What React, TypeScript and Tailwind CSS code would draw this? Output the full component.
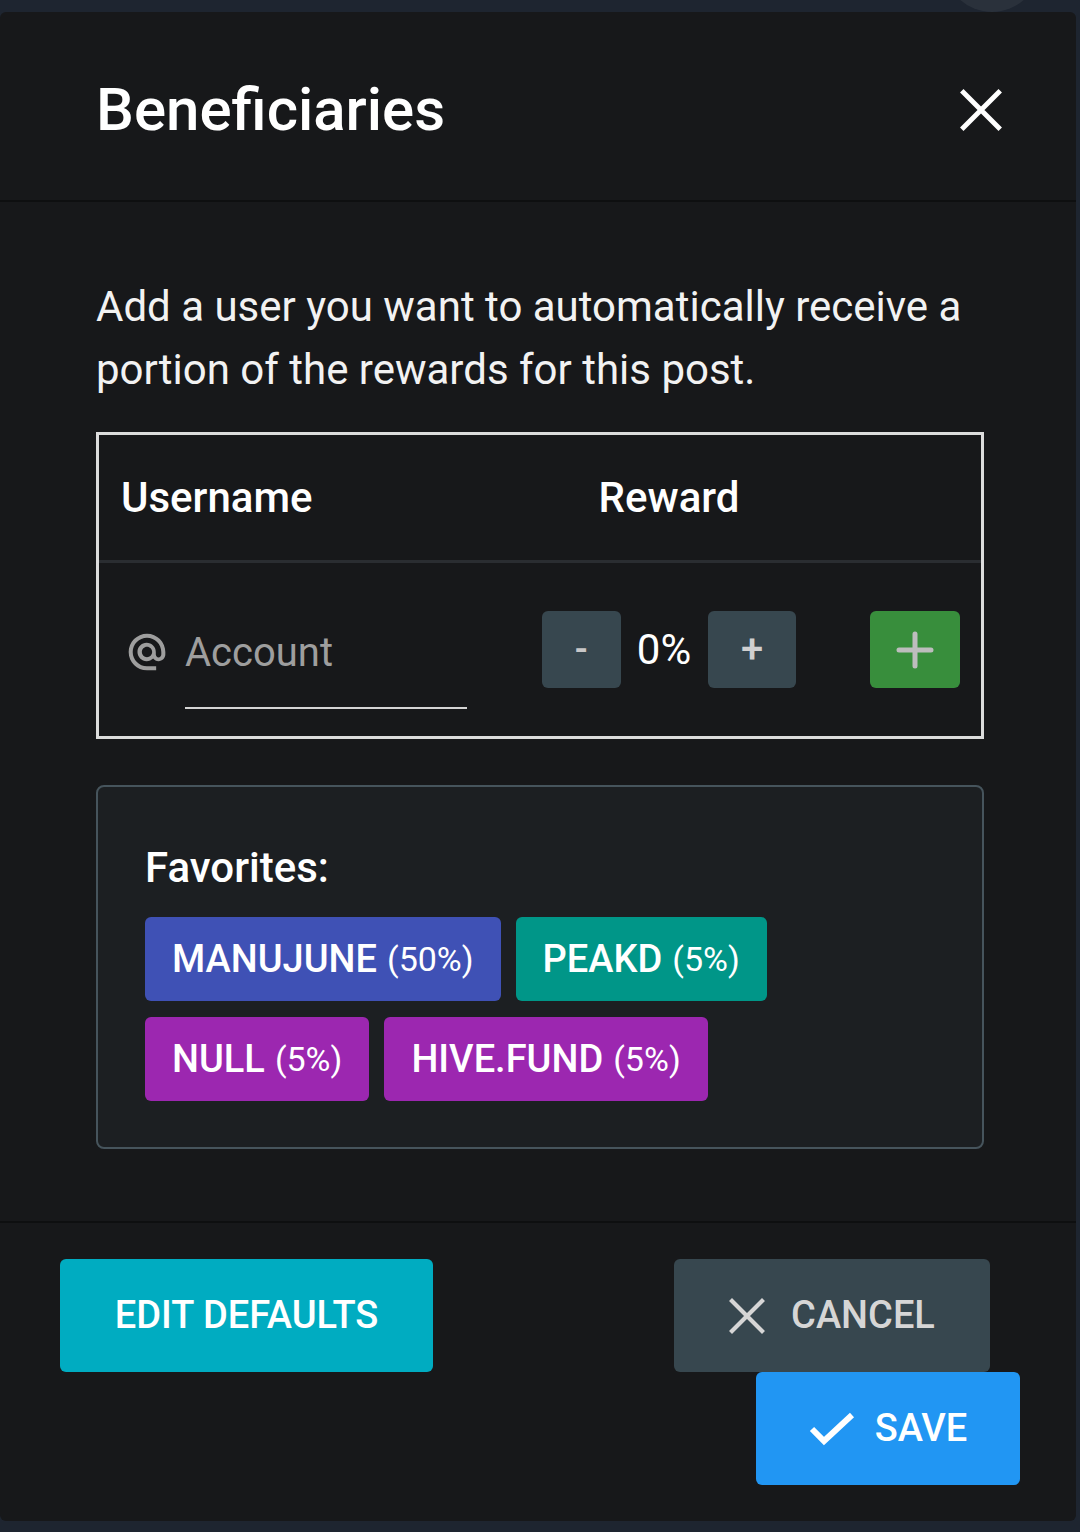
import React from 'react'

const CloseIcon = ({ size, stroke, color }: { size: number; stroke: number; color: string }) => (
    <svg width={size} height={size} viewBox="0 0 24 24" fill="none">
        <path d="M2 2L22 22M22 2L2 22" stroke={color} strokeWidth={stroke} strokeLinecap="square" />
    </svg>
)

const CheckIcon = () => (
    <svg width="46" height="36" viewBox="0 0 46 36" fill="none">
        <path d="M3 18L15 30L43 4" stroke="white" strokeWidth="6" />
    </svg>
)

const AtIcon = () => (
    <svg width="44" height="44" viewBox="0 0 24 24" fill="#9e9e9e">
        <path d="M12 2C6.48 2 2 6.48 2 12s4.48 10 10 10h5v-2.2h-5c-4.3 0-7.8-3.5-7.8-7.8S7.7 4.2 12 4.2s7.8 3.5 7.8 7.8v1.43c0 .79-.71 1.57-1.5 1.57s-1.5-.78-1.5-1.57V12c0-2.76-2.24-5-5-5s-5 2.24-5 5 2.24 5 5 5c1.38 0 2.64-.56 3.54-1.47.65.89 1.77 1.47 2.96 1.47 1.97 0 3.7-1.6 3.7-3.57V12c0-5.52-4.48-10-10-10zm0 12.8c-1.55 0-2.8-1.25-2.8-2.8s1.25-2.8 2.8-2.8 2.8 1.25 2.8 2.8-1.25 2.8-2.8 2.8z" />
    </svg>
)

const FAVORITES = [
    { name: 'MANUJUNE', pct: '50%', color: 'bg-[#3f51b5]' },
    { name: 'PEAKD', pct: '5%', color: 'bg-[#009688]' },
    { name: 'NULL', pct: '5%', color: 'bg-[#9c27b0]' },
    { name: 'HIVE.FUND', pct: '5%', color: 'bg-[#9c27b0]' },
]

const App = () => {
    return (
        <div className="relative min-h-[1532px] bg-[#1e2530] pt-[12px] pb-[9px] overflow-hidden" style={{ fontFamily: 'Roboto, "Noto Sans", sans-serif' }}>
            <div className="absolute top-[-84px] right-[40px] w-[96px] h-[96px] rounded-full bg-[#2a313b]" />

            <div className="relative mr-[4px] rounded-[6px] bg-[#17181a] text-white">
                {/* header */}
                <div className="flex items-center justify-between h-[190px] pl-[96px] pr-[74px] pt-[8px] border-b-2 border-[#0e0f10]">
                    <h1 className="text-[60px] font-medium leading-none">Beneficiaries</h1>
                    <button className="grid place-items-center w-[42px] h-[42px]">
                        <CloseIcon size={42} stroke={2.8} color="white" />
                    </button>
                </div>

                {/* body */}
                <div className="pl-[96px] pr-[92px] pt-[73px] pb-[72px]">
                    <p className="text-[42px] leading-[63px] text-[#f2f2f2]">
                        Add a user you want to automatically receive a portion of the rewards for this post.
                    </p>

                    <div className="mt-[31px] border-[3px] border-[#dcdcdc]">
                        <div className="grid grid-cols-[420px_300px_1fr] h-[128px] items-center border-b-[3px] border-[#2a2d31]">
                            <p className="pl-[22px] text-[42px] font-medium">Username</p>
                            <p className="text-center text-[42px] font-medium">Reward</p>
                            <div />
                        </div>
                        <div className="grid grid-cols-[420px_300px_1fr] h-[173px] items-center">
                            <div className="flex items-start pl-[26px] pt-[20px]">
                                <div className="mt-[20px]"><AtIcon /></div>
                                <div className="ml-[16px] w-[282px] h-[99px] border-b-2 border-[#d4d4d4] pt-[13px]">
                                    <span className="text-[40px] text-[#9e9e9e]">Account</span>
                                </div>
                            </div>
                            <div className="flex items-center justify-center">
                                <button className="w-[79px] h-[77px] rounded-[6px] bg-[#37474f] text-[#c8c8c8] text-[38px] font-medium">-</button>
                                <span className="ml-[16px] mr-[17px] text-[42px] text-white">0%</span>
                                <button className="w-[88px] h-[77px] rounded-[6px] bg-[#37474f] text-[#d0d0d0] text-[40px] font-medium">+</button>
                            </div>
                            <div className="flex justify-end pr-[21px]">
                                <button className="grid place-items-center w-[90px] h-[77px] rounded-[6px] bg-[#388e3c]">
                                    <svg width="38" height="38" viewBox="0 0 38 38">
                                        <path d="M19 3V35M3 19H35" stroke="#bdbdbd" strokeWidth="5" strokeLinecap="round" />
                                    </svg>
                                </button>
                            </div>
                        </div>
                    </div>

                    <div className="mt-[46px] rounded-[8px] border-2 border-[#46545c] bg-[#1c1f22] pl-[47px] pr-[40px] pt-[60px] pb-[46px]">
                        <p className="text-[42px] font-medium leading-none">Favorites:</p>
                        <div className="mt-[28px] flex flex-wrap w-[660px] gap-x-[15px] gap-y-[16px]">
                            {FAVORITES.map((fav) => (
                                <div key={fav.name} className={`${fav.color} h-[84px] px-[27px] rounded-[6px] flex items-center`}>
                                    <span className="text-[38px] font-medium">{fav.name}</span>
                                    <span className="ml-[10px] text-[34px]">({fav.pct})</span>
                                </div>
                            ))}
                        </div>
                    </div>
                </div>

                {/* footer */}
                <div className="flex justify-between items-start border-t-2 border-[#0e0f10] pl-[60px] pr-[56px] pt-[36px] pb-[36px]">
                    <button className="h-[113px] w-[373px] rounded-[6px] bg-[#00acc1] text-[38px] font-medium">
                        EDIT DEFAULTS
                    </button>
                    <div className="flex flex-col items-end">
                        <button className="mr-[30px] h-[113px] w-[316px] rounded-[6px] bg-[#37474f] flex items-center justify-center gap-[26px] text-[38px] font-medium text-[#d6d6d6]">
                            <CloseIcon size={36} stroke={2.8} color="#d6d6d6" />
                            CANCEL
                        </button>
                        <button className="h-[113px] w-[264px] rounded-[6px] bg-[#2196f3] flex items-center justify-center gap-[20px] text-[38px] font-medium">
                            <CheckIcon />
                            SAVE
                        </button>
                    </div>
                </div>
            </div>
        </div>
    )
}

export default App
